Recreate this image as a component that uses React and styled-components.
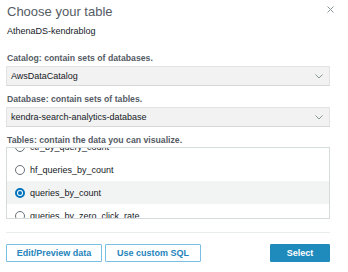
import React, { useLayoutEffect, useRef, useState } from 'react';
import styled, { createGlobalStyle } from 'styled-components';

const GlobalStyle = createGlobalStyle`
  html, body {
    margin: 0;
    padding: 0;
    background: #fff;
  }
  body {
    font-family: "Liberation Sans", Arial, sans-serif;
    color: #16191f;
  }
`;

const Panel = styled.div`
  width: 348px;
  height: 272px;
  box-sizing: border-box;
  padding: 3px 18px 0 6px;
  overflow: hidden;
`;

const Header = styled.div`
  display: flex;
  justify-content: space-between;
  align-items: flex-start;
  padding-left: 1px;
`;

const Title = styled.div`
  font-size: 13px;
  line-height: 18px;
  color: #545b64;
`;

const CloseButton = styled.div`
  display: flex;
  margin: 2px -8px 0 0;
  width: 16px;
  height: 8px;
  align-items: center;
  justify-content: center;
`;

const Subtitle = styled.div`
  margin-top: 3px;
  padding-left: 1px;
  font-size: 9px;
  line-height: 14px;
  color: #16191f;
`;

const Field = styled.div`
  margin-top: ${props => props.first ? '13px' : '6px'};
`;

const Label = styled.div`
  padding-left: 1px;
  margin-bottom: ${props => props.tight ? '0' : '1px'};
  font-size: 8.7px;
  line-height: 14px;
  font-weight: bold;
  color: #545b64;
`;

const Select = styled.div`
  display: flex;
  align-items: center;
  justify-content: space-between;
  height: 20px;
  box-sizing: border-box;
  padding: 0 6px 0 4px;
  background: #f2f2f2;
  border: 1px solid #e1e4e4;
  border-bottom-color: #d5d9d9;
  font-size: 9px;
  line-height: 12px;
  color: #16191f;
`;

const List = styled.div`
  height: 72px;
  box-sizing: border-box;
  border: 1px solid #d5dbdb;
  overflow: hidden;
`;

const Row = styled.div`
  display: flex;
  align-items: center;
  gap: 5px;
  height: 23px;
  padding-left: 8px;
  background: ${props => props.selected ? '#f2f3f3' : '#fff'};
  font-size: 9px;
  color: #16191f;
`;

const Radio = styled.span`
  box-sizing: border-box;
  width: 10px;
  height: 10px;
  border-radius: 50%;
  border: ${props => props.checked ? '2px solid #0073bb' : '1px solid #687078'};
  display: flex;
  align-items: center;
  justify-content: center;
  background: #fff;
  &::after {
    content: '';
    display: ${props => props.checked ? 'block' : 'none'};
    width: 4px;
    height: 4px;
    border-radius: 50%;
    background: #0073bb;
  }
`;

const Footer = styled.div`
  display: flex;
  align-items: center;
  gap: 3px;
  margin-top: 13px;
  padding-top: 11px;
  border-top: 1px solid #eaeded;
`;

const Button = styled.button`
  height: 18px;
  width: ${props => props.width || 96}px;
  margin-left: ${props => props.push ? 'auto' : '0'};
  padding: 0;
  box-sizing: border-box;
  font-family: inherit;
  font-size: 9px;
  line-height: 12px;
  font-weight: bold;
  border: 1px solid ${props => props.primary ? '#1f8bbd' : '#79bfe4'};
  background: ${props => props.primary ? '#1f8bbd' : '#fff'};
  color: ${props => props.primary ? '#fff' : '#2483bb'};
  border-radius: 1px;
  cursor: pointer;
`;

const Chevron = () => (
  <svg width="8" height="5" viewBox="0 0 8 5">
    <path d="M0.5 0.5 L4 4 L7.5 0.5" fill="none" stroke="#879596" strokeWidth="1" />
  </svg>
);

const CloseIcon = () => (
  <svg width="7" height="7" viewBox="0 0 7 7">
    <path d="M0.5 0.5 L6.5 6.5 M6.5 0.5 L0.5 6.5" stroke="#879596" strokeWidth="1" />
  </svg>
);

const tables = [
  'clicks_by_query_count',
  'ctr_by_query_count',
  'hf_queries_by_count',
  'queries_by_count',
  'queries_by_zero_click_rate',
  'queries_by_zero_hit_rate',
];

export default function App() {
  const [selected, setSelected] = useState('queries_by_count');
  const listRef = useRef(null);

  useLayoutEffect(() => {
    if (listRef.current) listRef.current.scrollTop = 36;
  }, []);

  return (
    <Panel>
      <GlobalStyle />
      <Header>
        <Title>Choose your table</Title>
        <CloseButton><CloseIcon /></CloseButton>
      </Header>
      <Subtitle>AthenaDS-kendrablog</Subtitle>

      <Field first>
        <Label>Catalog: contain sets of databases.</Label>
        <Select>
          <span>AwsDataCatalog</span>
          <Chevron />
        </Select>
      </Field>

      <Field>
        <Label>Database: contain sets of tables.</Label>
        <Select>
          <span>kendra-search-analytics-database</span>
          <Chevron />
        </Select>
      </Field>

      <Field>
        <Label tight>Tables: contain the data you can visualize.</Label>
        <List ref={listRef}>
          {tables.map(name => (
            <Row key={name} selected={name === selected} onClick={() => setSelected(name)}>
              <Radio checked={name === selected} />
              <span>{name}</span>
            </Row>
          ))}
        </List>
      </Field>

      <Footer>
        <Button>Edit/Preview data</Button>
        <Button>Use custom SQL</Button>
        <Button primary push width={60}>Select</Button>
      </Footer>
    </Panel>
  );
}
